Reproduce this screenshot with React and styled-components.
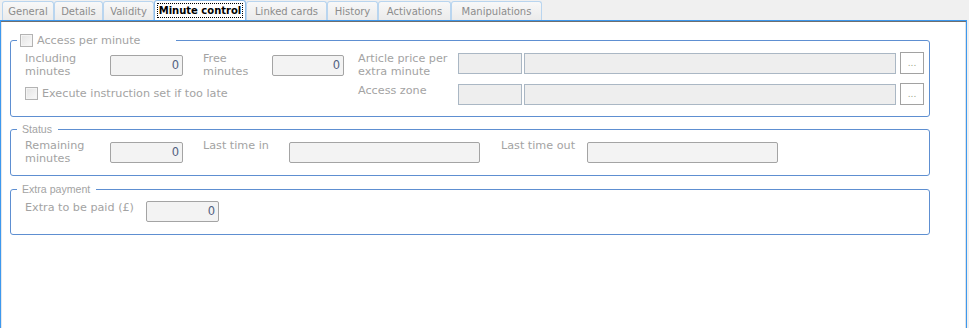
import React from 'react'
import styled, {createGlobalStyle, css} from 'styled-components'

const Global = createGlobalStyle`
   html, body {
      margin: 0;
      padding: 0;
      background: #f0f0f0;
      overflow: hidden;
   }
   body {
      font-family: 'DejaVu Sans', Verdana, sans-serif;
      font-size: 10px;
   }
`;

const Page = styled.div`
   width: 969px;
   height: 328px;
   display: flex;
   flex-direction: column;
`;

const TabStrip = styled.div`
   height: 20px;
   display: flex;
   align-items: flex-end;
   padding-left: 2px;
   background: #f0f0f0;
`;

const Tab = styled.div`
   box-sizing: border-box;
   width: ${p => p.w}px;
   height: 19px;
   display: flex;
   align-items: center;
   justify-content: center;
   border: 1px solid #b9d5ef;
   border-bottom: 0;
   border-radius: 3px 3px 0 0;
   background: linear-gradient(#f8f8f8, #ebebeb);
   color: #8c8c8c;
   white-space: nowrap;
   ${p => p.active && css`
      height: 20px;
      background: #fff;
      color: #000;
      font-weight: bold;
      border-color: #8ebbe6;
   `}
`;

const Focus = styled.span`
   outline: 1px dotted #000;
   padding: 0 1px;
   line-height: 13px;
`;

const Panel = styled.div`
   flex: 1;
   box-sizing: border-box;
   width: 967px;
   border: 1px solid #3d98ee;
   border-bottom: 0;
   background: #fff;
   box-shadow: inset 0 1px 0 #6f6f6f, inset -1px 0 0 #e2e2e2, inset 1px 0 0 #e8e8e8;
   padding: 13px 36px 0 9px;
   display: flex;
   flex-direction: column;
   gap: 6px;
`;

const Group = styled.fieldset`
   margin: ${p => p.mt || 0}px 0 0;
   min-width: 0;
   border: 1px solid #5e8fd1;
   border-radius: 3px;
   padding: ${p => p.pad};
   display: flex;
   flex-direction: column;
   gap: ${p => p.gap || 0}px;
`;

const Legend = styled.legend`
   margin-left: -8px;
   padding: 0 ${p => p.padR}px 0 ${p => p.padL}px;
   width: ${p => p.w ? p.w + 'px' : 'auto'};
   box-sizing: border-box;
   height: 13px;
   line-height: 13px;
   display: flex;
   align-items: center;
   gap: 4px;
   color: #a3a3a3;
   font-family: ${p => p.plain ? "'Liberation Sans', Arial, sans-serif" : 'inherit'};
   font-size: ${p => p.plain ? 10.6 : 11.2}px;
`;

const Row = styled.div`
   display: flex;
   align-items: flex-start;
   height: ${p => p.h}px;
`;

const Label = styled.div`
   width: ${p => p.w}px;
   flex: none;
   color: #a3a3a3;
   line-height: 13px;
   font-size: 11.2px;
   white-space: nowrap;
   margin-top: ${p => p.dy || 0}px;
`;

const Gap = styled.div`
   width: ${p => p.w}px;
   flex: none;
`;

const NumBox = styled.div`
   box-sizing: border-box;
   width: ${p => p.w}px;
   height: 21px;
   flex: none;
   border: 1px solid #a4a4a4;
   border-radius: 2px;
   background: #f3f3f3;
   color: #51617f;
   font-size: 11.5px;
   text-align: right;
   padding-right: 3px;
   line-height: 19px;
   margin-top: ${p => p.dy || 0}px;
`;

const FlatBox = styled.div`
   box-sizing: border-box;
   width: ${p => p.w ? p.w + 'px' : 'auto'};
   flex: ${p => p.w ? 'none' : 1};
   height: 21px;
   border: 1px solid #aab7c4;
   background: #eeeeee;
   margin-top: ${p => p.dy || 0}px;
`;

const DotButton = styled.div`
   box-sizing: border-box;
   width: 24px;
   height: 22px;
   flex: none;
   border: 1px solid #a2a2a2;
   background: #fff;
   color: #9aa58a;
   font-size: 9px;
   display: flex;
   align-items: flex-end;
   justify-content: center;
   padding-bottom: 5px;
   margin-left: 4px;
   margin-top: ${p => p.dy || 0}px;
`;

const Check = styled.span`
   box-sizing: border-box;
   width: 13px;
   height: 13px;
   flex: none;
   border: 1px solid #b3b3b3;
   background: linear-gradient(135deg, #e3e3e3, #fafafa);
   box-shadow: inset 0 0 0 1px #f4f4f4;
`;

const CheckLabel = styled.div`
   display: flex;
   align-items: center;
   gap: 4px;
   color: #a3a3a3;
   font-size: 11.2px;
   width: ${p => p.w}px;
   height: 21px;
   flex: none;
   white-space: nowrap;
`;

const tabs = [
   ['General', 52], ['Details', 49], ['Validity', 51], ['Minute control', 92],
   ['Linked cards', 81], ['History', 51], ['Activations', 73], ['Manipulations', 91],
];

const Lines = ({children}) => <>{children.split('\n').map((l, i) => <div key={i}>{l}</div>)}</>;

const LookupPair = ({dy}) => (
   <>
      <FlatBox w={64} dy={dy}/>
      <Gap w={2}/>
      <FlatBox dy={dy}/>
      <DotButton dy={dy - 1}>...</DotButton>
   </>
);

const App = () => (
   <Page>
      <Global/>
      <TabStrip>
         {tabs.map(([name, w]) => (
            <Tab key={name} w={w} active={name === 'Minute control'}>
               {name === 'Minute control' ? <Focus>{name}</Focus> : name}
            </Tab>
         ))}
      </TabStrip>
      <Panel>
         <Group pad="4px 5px 12px 14px" gap={6}>
            <Legend w={159} padL={3} padR={3}>
               <Check/>
               Access per minute
            </Legend>
            <Row h={26}>
               <Label w={85} dy={1}><Lines>{'Including\nminutes'}</Lines></Label>
               <NumBox w={73} dy={4}>0</NumBox>
               <Gap w={20}/>
               <Label w={69} dy={1}><Lines>{'Free\nminutes'}</Lines></Label>
               <NumBox w={72} dy={4}>0</NumBox>
               <Gap w={14}/>
               <Label w={100} dy={1}><Lines>{'Article price per\nextra minute'}</Lines></Label>
               <LookupPair dy={2}/>
            </Row>
            <Row h={21}>
               <CheckLabel w={333}>
                  <Check/>
                  Execute instruction set if too late
               </CheckLabel>
               <Label w={100} dy={1}>Access zone</Label>
               <LookupPair dy={1}/>
            </Row>
         </Group>
         <Group pad="2px 5px 11px 14px">
            <Legend plain padL={5} padR={6}>Status</Legend>
            <Row h={26}>
               <Label w={85} dy={1}><Lines>{'Remaining\nminutes'}</Lines></Label>
               <NumBox w={73} dy={4}>0</NumBox>
               <Gap w={20}/>
               <Label w={86} dy={1}>Last time in</Label>
               <NumBox w={191} dy={4}/>
               <Gap w={21}/>
               <Label w={86} dy={1}>Last time out</Label>
               <NumBox w={191} dy={4}/>
            </Row>
         </Group>
         <Group pad="4px 5px 13px 14px" mt={1}>
            <Legend plain padL={5} padR={6}>Extra payment</Legend>
            <Row h={21}>
               <Label w={121} dy={1}>Extra to be paid (£)</Label>
               <NumBox w={73} dy={1}>0</NumBox>
            </Row>
         </Group>
      </Panel>
   </Page>
);

export default App;
